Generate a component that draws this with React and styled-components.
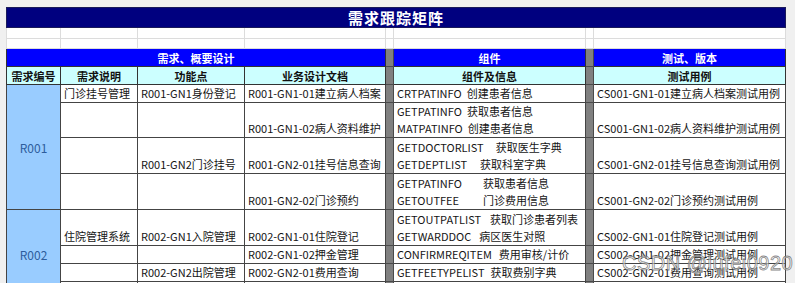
import React from "react";
import styled, { createGlobalStyle } from "styled-components";

const GlobalStyle = createGlobalStyle`
  html, body {
    margin: 0;
    padding: 0;
    background: #f0f0f0;
  }
  body {
    font-family: "Noto Sans CJK SC", "Noto Sans", sans-serif;
  }
`;

const Page = styled.div`
  position: relative;
  width: 795px;
  height: 283px;
  overflow: hidden;
  padding: 7px 0 0 6px;
  box-sizing: border-box;
`;

const Sheet = styled.table`
  border-collapse: collapse;
  table-layout: fixed;
  width: 779px;
  font-size: 11px;
  color: #151515;
`;

const Row = styled.tr`
  height: ${(p) => p.$h}px;
`;

const TitleCell = styled.td`
  background: #00007f;
  color: #fff;
  font-weight: 700;
  font-size: 15px;
  letter-spacing: 1px;
  text-align: center;
  padding: 0;
  line-height: 18px;
  border: 1px solid #1a1a5a;
`;

const BlankCell = styled.td`
  background: #fff;
  border: 1px solid #dcdcdc;
  padding: 0;
`;

const SectionCell = styled.td`
  background: #0000ff;
  color: #fff;
  font-weight: 700;
  text-align: center;
  padding: 0;
  line-height: 16px;
  border: 1px solid #333;
`;

const HeadCell = styled.td`
  background: #ccffff;
  color: #111;
  font-weight: 700;
  text-align: center;
  padding: 0;
  line-height: 16px;
  border: 1px solid #333;
`;

const Gutter = styled.td`
  background: #808080;
  border: 1px solid #4a4a4a;
  padding: 0;
`;

const Cell = styled.td`
  background: #fff;
  border: 1px solid #444;
  padding: 0 3px;
  vertical-align: bottom;
  white-space: nowrap;
  overflow: hidden;
  line-height: 17px;
`;

const IdCell = styled.td`
  background: #99ccff;
  border: 1px solid #444;
  color: #2d5d9c;
  font-size: 12px;
  text-align: center;
  vertical-align: middle;
  padding: 0;
`;

const Line = styled.div`
  display: flex;
  white-space: nowrap;
`;

const Name = styled.span`
  margin-left: ${(p) => p.$gap}px;
`;

const Watermark = styled.div`
  position: absolute;
  left: 622px;
  top: 252px;
  font-family: "Liberation Sans", Arial, sans-serif;
  font-size: 20px;
  letter-spacing: 0.5px;
  color: rgba(255, 255, 255, 0.6);
  -webkit-text-stroke: 0.8px rgba(110, 110, 110, 0.85);
  pointer-events: none;
  white-space: nowrap;
`;

const widths = [54, 77, 107, 141, 8, 192, 8, 192];

const rows = [
  {
    id: "R001", span: 4, h: 18,
    desc: "门诊挂号管理", func: "R001-GN1身份登记", doc: "R001-GN1-01建立病人档案",
    comps: [["CRTPATINFO", 5, "创建患者信息"]],
    test: "CS001-GN1-01建立病人档案测试用例",
  },
  {
    h: 35, desc: "", func: "", doc: "R001-GN1-02病人资料维护",
    comps: [["GETPATINFO", 5, "获取患者信息"], ["MATPATINFO", 5, "创建患者信息"]],
    test: "CS001-GN1-02病人资料维护测试用例",
  },
  {
    h: 36, desc: "", func: "R001-GN2门诊挂号", doc: "R001-GN2-01挂号信息查询",
    comps: [["GETDOCTORLIST", 12, "获取医生字典"], ["GETDEPTLIST", 13, "获取科室字典"]],
    test: "CS001-GN2-01挂号信息查询测试用例",
  },
  {
    h: 36, desc: "", func: "", doc: "R001-GN2-02门诊预约",
    comps: [["GETPATINFO", 21, "获取患者信息"], ["GETOUTFEE", 24, "门诊费用信息"]],
    test: "CS001-GN2-02门诊预约测试用例",
  },
  {
    id: "R002", span: 4, h: 36,
    desc: "住院管理系统", func: "R002-GN1入院管理", doc: "R002-GN1-01住院登记",
    comps: [["GETOUTPATLIST", 9, "获取门诊患者列表"], ["GETWARDDOC", 8, "病区医生对照"]],
    test: "CS002-GN1-01住院登记测试用例",
  },
  {
    h: 17, desc: "", func: "", doc: "R002-GN1-02押金管理",
    comps: [["CONFIRMREQITEM", 7, "费用审核/计价"]],
    test: "CS002-GN1-02押金管理测试用例",
  },
  {
    h: 18, desc: "", func: "R002-GN2出院管理", doc: "R002-GN2-01费用查询",
    comps: [["GETFEETYPELIST", 6, "获取费别字典"]],
    test: "CS002-GN2-01费用查询测试用例",
  },
  { h: 18, desc: "", func: "", doc: "", comps: [], test: "" },
];

function DataRow({ row }) {
  return (
    <Row $h={row.h}>
      {row.id && <IdCell rowSpan={row.span}>{row.id}</IdCell>}
      <Cell>{row.desc}</Cell>
      <Cell>{row.func}</Cell>
      <Cell>{row.doc}</Cell>
      <Gutter />
      <Cell>
        {row.comps.map(([code, gap, name]) => (
          <Line key={code + name}>
            <span>{code}</span>
            <Name $gap={gap}>{name}</Name>
          </Line>
        ))}
      </Cell>
      <Gutter />
      <Cell>{row.test}</Cell>
    </Row>
  );
}

export default function App() {
  return (
    <Page>
      <GlobalStyle />
      <Sheet>
        <colgroup>
          {widths.map((w, i) => (
            <col key={i} style={{ width: w }} />
          ))}
        </colgroup>
        <tbody>
          <Row $h={20}>
            <TitleCell colSpan={8}>需求跟踪矩阵</TitleCell>
          </Row>
          <Row $h={11}>
            {widths.map((_, i) => <BlankCell key={i} />)}
          </Row>
          <Row $h={10}>
            {widths.map((_, i) => <BlankCell key={i} />)}
          </Row>
          <Row $h={18}>
            <SectionCell colSpan={4}>需求、概要设计</SectionCell>
            <Gutter />
            <SectionCell>组件</SectionCell>
            <Gutter />
            <SectionCell>测试、版本</SectionCell>
          </Row>
          <Row $h={18}>
            <HeadCell>需求编号</HeadCell>
            <HeadCell>需求说明</HeadCell>
            <HeadCell>功能点</HeadCell>
            <HeadCell>业务设计文档</HeadCell>
            <Gutter />
            <HeadCell>组件及信息</HeadCell>
            <Gutter />
            <HeadCell>测试用例</HeadCell>
          </Row>
          {rows.map((row, i) => (
            <DataRow key={i} row={row} />
          ))}
        </tbody>
      </Sheet>
      <Watermark>CSDN @lufei0920</Watermark>
    </Page>
  );
}
